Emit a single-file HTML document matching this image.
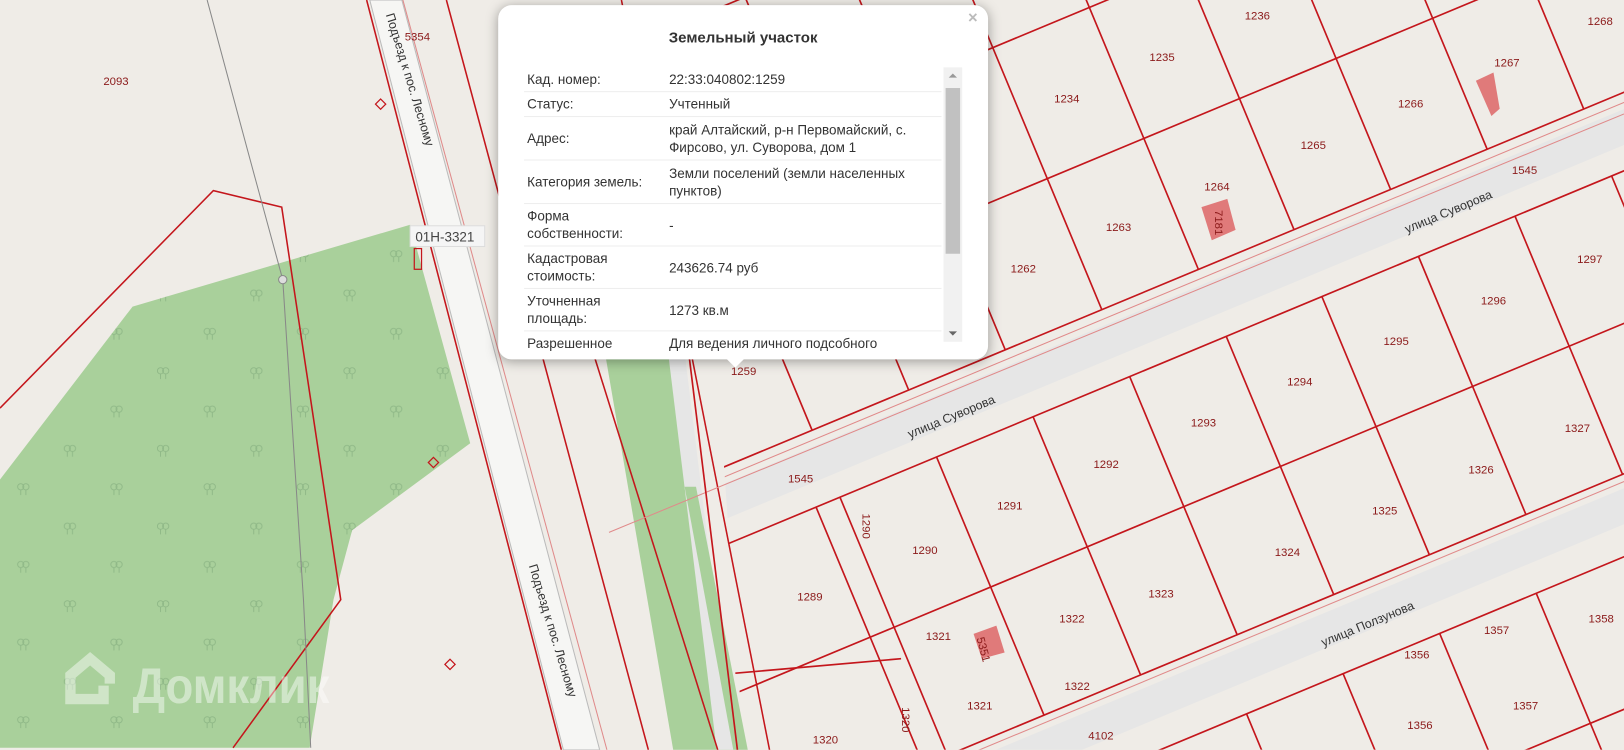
<!DOCTYPE html>
<html><head><meta charset="utf-8"><style>
html,body{margin:0;padding:0;width:1624px;height:750px;overflow:hidden;background:#efece7;}
#w{position:absolute;left:0;top:0;width:1568px;height:724px;overflow:hidden;transform:scale(1.03571);transform-origin:0 0;font-family:"Liberation Sans",sans-serif;}
svg{position:absolute;left:0;top:0}
.pop{position:absolute;left:481px;top:5px;width:473px;height:342px;background:#fff;border-radius:13px;box-shadow:0 2px 12px rgba(0,0,0,.35);}
.pop h1{margin:0;position:absolute;left:0;right:0;top:24px;text-align:center;font-size:14.5px;font-weight:bold;color:#333;}
.x{position:absolute;right:10px;top:4px;color:#bbb;font-size:16px;font-weight:bold}
.tb{position:absolute;left:25px;top:60px;width:403px;font-size:13px;color:#333;line-height:17px}
.r{display:flex;border-bottom:1px solid #eee;align-items:center}
.l{width:140px;flex:none;padding-left:3px;padding-right:24px;box-sizing:border-box}
.v{flex:1;padding:2px 0}
.sb{position:absolute;left:430px;top:60px;width:18px;height:265px;background:#f1f1f1}
.th{position:absolute;left:2px;top:20px;width:14px;height:160px;background:#c1c1c1}
.tail{position:absolute;left:219px;top:340px;width:0;height:0;border-left:10px solid transparent;border-right:10px solid transparent;border-top:10px solid #fff}
</style></head><body><div id="w">
<svg width="1568" height="724" viewBox="0 0 1568 724" font-family="Liberation Sans, sans-serif">
<defs>
<clipPath id="cp"><polygon points="668,0 1568,0 1568,724 718,724"/></clipPath>
<pattern id="tr" width="90" height="75" patternUnits="userSpaceOnUse">
<g fill="none" stroke="#8fb887" stroke-width="0.9"><circle cx="20" cy="20" r="3"/><circle cx="25" cy="20" r="3"/><path d="M20 23v5M25 23v5"/><circle cx="65" cy="58" r="3"/><circle cx="70" cy="58" r="3"/><path d="M65 61v5M70 61v5"/></g></pattern>
</defs>
<rect width="1568" height="724" fill="#efece7"/>
<polygon points="0,463 128,296 396,217 454,428 340,512 322,579 299,722 0,722" fill="#a9d09b"/>
<polygon points="0,463 128,296 396,217 454,428 340,512 322,579 299,722 0,722" fill="url(#tr)"/>
<polygon points="584,340 645,340 708,724 650,724" fill="#a9d09b"/>
<polygon points="645,340 661,340 708,724 692,724" fill="#e6e6e6"/>
<polygon points="661,470 672,470 722,724 708,724" fill="#a9d09b"/>
<polygon points="357,0 388,0 579,724 544,724" fill="#f6f6f4" stroke="#bbb" stroke-width="1"/>
<g stroke="#c4161c" fill="none" stroke-width="1.5">
<line x1="354" y1="0" x2="542" y2="724"/>
<line x1="431" y1="0" x2="626" y2="724"/>
<line x1="560" y1="300" x2="693" y2="724" />
<line x1="600" y1="0" x2="743" y2="724" />
<polyline points="0,394 206,184 272,200 329,579 225,722"/>
<rect x="400" y="240" width="7" height="20" stroke-width="1.2"/>
<rect x="364" y="97" width="7" height="7" transform="rotate(45 367.5 100.5)" stroke-width="1.2"/>
<rect x="415" y="443" width="7" height="7" transform="rotate(45 418.5 446.5)" stroke-width="1.2"/>
<rect x="431" y="638" width="7" height="7" transform="rotate(45 434.5 641.5)" stroke-width="1.2"/>
</g>
<line x1="389" y1="0" x2="586" y2="724" stroke="#e08a8a" stroke-width="1"/>
<polyline points="200,0 239,145 273,270 293,579 300,722" stroke="#888" fill="none"/>
<circle cx="273" cy="270" r="4" fill="#ddd" stroke="#888"/>
<g clip-path="url(#cp)">
<g transform="translate(696,490) rotate(-22.6)">
<rect x="-200" y="-20" width="1600" height="32" fill="#e6e6e6"/>
<rect x="-200" y="318" width="1600" height="32" fill="#e6e6e6"/>
<g stroke="#e08a8a" stroke-width="1"><line x1="-400" y1="-26" x2="1500" y2="-26"/><line x1="-400" y1="312" x2="1500" y2="312"/></g>
<g stroke="#c4161c" stroke-width="1.6">
<line x1="-400" y1="-35" x2="1500" y2="-35"/><line x1="-400" y1="-172" x2="1500" y2="-172"/><line x1="-400" y1="-309" x2="1500" y2="-309"/><line x1="-400" y1="-446" x2="1500" y2="-446"/><line x1="-400" y1="-583" x2="1500" y2="-583"/>
<line x1="-400" y1="35" x2="1500" y2="35"/><line x1="-400" y1="171" x2="1500" y2="171"/><line x1="-400" y1="305" x2="1500" y2="305"/>
<line x1="-400" y1="379" x2="1500" y2="379"/><line x1="-400" y1="515" x2="1500" y2="515"/><line x1="-400" y1="650" x2="1500" y2="650"/>
<line x1="-193" y1="-35" x2="-193" y2="-800"/><line x1="-92" y1="-35" x2="-92" y2="-800"/><line x1="9" y1="-35" x2="9" y2="-800"/><line x1="110" y1="-35" x2="110" y2="-800"/><line x1="211" y1="-35" x2="211" y2="-800"/><line x1="312" y1="-35" x2="312" y2="-800"/><line x1="413" y1="-35" x2="413" y2="-800"/><line x1="514" y1="-35" x2="514" y2="-800"/><line x1="614" y1="-35" x2="614" y2="-800"/><line x1="715" y1="-35" x2="715" y2="-800"/><line x1="816" y1="-35" x2="816" y2="-800"/><line x1="917" y1="-35" x2="917" y2="-800"/><line x1="1018" y1="-35" x2="1018" y2="-800"/>
<line x1="110" y1="35" x2="110" y2="305"/><line x1="211" y1="35" x2="211" y2="305"/><line x1="312" y1="35" x2="312" y2="305"/><line x1="413" y1="35" x2="413" y2="305"/><line x1="514" y1="35" x2="514" y2="305"/><line x1="614" y1="35" x2="614" y2="305"/><line x1="715" y1="35" x2="715" y2="305"/><line x1="816" y1="35" x2="816" y2="305"/><line x1="917" y1="35" x2="917" y2="305"/><line x1="1018" y1="35" x2="1018" y2="305"/><line x1="85" y1="35" x2="85" y2="305"/>
<line x1="190" y1="379" x2="190" y2="800"/><line x1="291" y1="379" x2="291" y2="800"/><line x1="392" y1="379" x2="392" y2="800"/><line x1="493" y1="379" x2="493" y2="800"/><line x1="594" y1="379" x2="594" y2="800"/><line x1="695" y1="379" x2="695" y2="800"/><line x1="796" y1="379" x2="796" y2="800"/><line x1="897" y1="379" x2="897" y2="800"/>
</g>
</g>
</g>
<line x1="588" y1="514" x2="1568" y2="110" stroke="#e08a8a" stroke-width="1"/>
<g stroke="#c4161c" stroke-width="1.6"><line x1="660" y1="300" x2="712" y2="724"/><line x1="710" y1="650" x2="870" y2="636"/></g>
<g fill="#e07a7a"><polygon points="1425,78 1442,70 1448,105 1440,112"/><polygon points="1160,200 1185,192 1193,222 1170,232"/><polygon points="940,612 962,604 970,630 948,636"/></g>
<g font-size="11" fill="#8b1a1a" text-anchor="middle">
<text x="1214" y="19">1236</text><text x="1122" y="59">1235</text><text x="1030" y="99">1234</text><text x="1362" y="104">1266</text><text x="1455" y="64">1267</text><text x="1545" y="24">1268</text><text x="1268" y="144">1265</text><text x="1175" y="184">1264</text><text x="1080" y="223">1263</text><text x="988" y="263">1262</text><text x="1472" y="168">1545</text><text x="1535" y="254">1297</text><text x="1442" y="294">1296</text><text x="1348" y="333">1295</text><text x="1255" y="372">1294</text><text x="1162" y="412">1293</text><text x="1068" y="452">1292</text><text x="975" y="492">1291</text><text x="893" y="535">1290</text><text x="782" y="580">1289</text><text x="1523" y="417">1327</text><text x="1430" y="457">1326</text><text x="1337" y="497">1325</text><text x="1243" y="537">1324</text><text x="1121" y="577">1323</text><text x="1035" y="601">1322</text><text x="906" y="618">1321</text><text x="1040" y="666">1322</text><text x="946" y="685">1321</text><text x="797" y="718">1320</text><text x="1445" y="612">1357</text><text x="1546" y="601">1358</text><text x="1368" y="636">1356</text><text x="1473" y="685">1357</text><text x="1371" y="704">1356</text><text x="1063" y="714">4102</text><text x="773" y="466">1545</text><text x="718" y="362">1259</text><text x="403" y="39">5354</text><text x="112" y="82">2093</text>
<text transform="translate(833,508) rotate(90)">1290</text><text transform="translate(871,695) rotate(90)">1320</text><text transform="translate(1173,215) rotate(90)">7181</text><text transform="translate(946,628) rotate(75)">5351</text>
</g>
<g font-size="12" fill="#333" text-anchor="middle">
<text transform="translate(920,406) rotate(-22.6)">улица Суворова</text>
<text transform="translate(1400,208) rotate(-22.6)">улица Суворова</text>
<text transform="translate(1322,606) rotate(-22.6)">улица Ползунова</text>
<text transform="translate(392,78) rotate(73)">Подъезд к пос. Лесному</text>
<text transform="translate(530,610) rotate(73)">Подъезд к пос. Лесному</text>
</g>
<rect x="396" y="218" width="72" height="20" fill="#f5f5f5" stroke="#ddd"/>
<text x="401" y="233" font-size="13" fill="#444">01Н-3321</text>
<g opacity=".45">
<path d="M106 660 V652 L87 636 L68 652 V675 H100 V662" fill="none" stroke="#fff" stroke-width="10" stroke-linejoin="miter"/>
<text x="128" y="679" font-size="48" font-weight="bold" fill="#fff" textLength="190" lengthAdjust="spacingAndGlyphs">Домклик</text>
</g>
</svg>
<div class="pop">
<div class="x">×</div>
<h1>Земельный участок</h1>
<div class="tb">
<div class="r" style="height:23px"><div class="l">Кад. номер:</div><div class="v">22:33:040802:1259</div></div>
<div class="r" style="height:23px"><div class="l">Статус:</div><div class="v">Учтенный</div></div>
<div class="r" style="height:41px"><div class="l">Адрес:</div><div class="v">край Алтайский, р-н Первомайский, с. Фирсово, ул. Суворова, дом 1</div></div>
<div class="r" style="height:41px"><div class="l">Категория земель:</div><div class="v">Земли поселений (земли населенных пунктов)</div></div>
<div class="r" style="height:40px"><div class="l">Форма собственности:</div><div class="v">-</div></div>
<div class="r" style="height:40px"><div class="l">Кадастровая стоимость:</div><div class="v">243626.74 руб</div></div>
<div class="r" style="height:40px"><div class="l">Уточненная площадь:</div><div class="v">1273 кв.м</div></div>
<div class="r" style="height:22px;border:0"><div class="l">Разрешенное</div><div class="v">Для ведения личного подсобного</div></div>
</div>
<div class="sb"><div class="th"></div><div style="position:absolute;left:5px;top:6px;border:4px solid transparent;border-bottom-color:#999;border-top:0"></div><div style="position:absolute;left:5px;bottom:6px;border:4px solid transparent;border-top-color:#666;border-bottom:0"></div></div>
<div class="tail"></div>
</div>
</div></body></html>
